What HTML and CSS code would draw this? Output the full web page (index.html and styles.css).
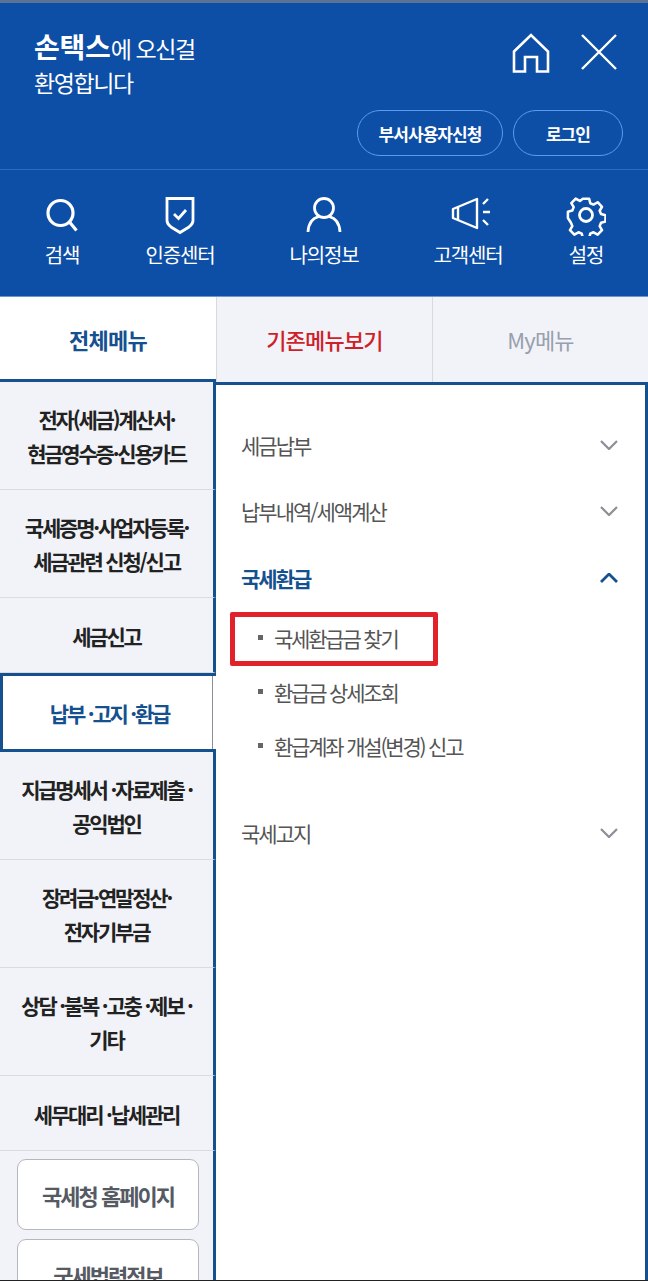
FILE: index.html
```html
<!DOCTYPE html>
<html lang="ko">
<head>
<meta charset="utf-8">
<meta name="viewport" content="width=device-width, initial-scale=1">
<title>손택스 전체메뉴</title>
<link rel="stylesheet" href="styles.css">
</head>
<body>
<div class="page">

  <header class="top">
    <div class="top-main">
      <p class="hello"><b>손택스</b>에 오신걸<br>환영합니다</p>
      <div class="top-icons">
        <svg width="38" height="40" viewBox="0 0 38 40" fill="none" stroke="#fff" stroke-width="2.6">
          <path d="M2 18.5 19 2l17 16.5V38.500H25V24H13v14.500H2z"/>
        </svg>
        <svg width="38" height="38" viewBox="0 0 38 38" fill="none" stroke="#fff" stroke-width="2.4">
          <path d="M2 2l34 34M36 2 2 36"/>
        </svg>
      </div>
    </div>
    <div class="top-btns">
      <a class="pill pill-wide">부서사용자신청</a>
      <a class="pill pill-small">로그인</a>
    </div>
  </header>

  <nav class="quick">
    <a class="quick-item">
      <svg width="34" height="38" viewBox="0 0 34 38" fill="none" stroke="#fff" stroke-width="3.200">
        <circle cx="15.500" cy="17" r="12.500"/><path d="M24.500 26l7 8.500"/>
      </svg>
      <span>검색</span>
    </a>
    <a class="quick-item">
      <svg width="34" height="38" viewBox="0 0 34 38" fill="none" stroke="#fff" stroke-width="2.800">
        <path d="M4 2.500h26v22c0 3-1.500 4.500-4 6.500l-9 5.500-9-5.500c-2.500-2-4-3.500-4-6.500z"/><path d="M11 18l4.500 4.500L23 14"/>
      </svg>
      <span>인증센터</span>
    </a>
    <a class="quick-item">
      <svg width="36" height="38" viewBox="0 0 36 38" fill="none" stroke="#fff" stroke-width="2.800">
        <circle cx="18" cy="12" r="9.500"/><path d="M2 36c.500-9 5-14 11-15.500M34 36c-.500-9-5-14-11-15.500"/>
      </svg>
      <span>나의정보</span>
    </a>
    <a class="quick-item">
      <svg width="46" height="38" viewBox="0 0 46 38" fill="none" stroke="#fff" stroke-width="2.400" stroke-linejoin="round">
        <path d="M8 13 32 3V32L8 22z"/><path d="M13 11v13"/><path d="M38 8l5-5M38 16h7M38 24l5 5"/>
      </svg>
      <span>고객센터</span>
    </a>
    <a class="quick-item">
      <svg width="40" height="40" viewBox="0 0 40 40" fill="none" stroke="#fff" stroke-width="2.800" stroke-linejoin="round">
        <circle cx="20" cy="20" r="6.500"/>
        <path d="M16.500 2h7l1.200 5 3.600 1.500 4.600-2.600 4.800 5-2.600 4.400 1.500 3.700 4.900 1.300v7l-4.900 1.300-1.500 3.700 2.600 4.400-4.800 5-4.600-2.600-3.600 1.500-1.200 5h-7l-1.200-5-3.600-1.500-4.600 2.600-4.800-5 2.600-4.400-1.500-3.700L0 23.300v-7l4.900-1.300 1.500-3.700L3.800 6.900l4.800-5 4.600 2.600 2.100-1.500z" transform="translate(1.900 1.900) scale(.905)"/>
      </svg>
      <span>설정</span>
    </a>
  </nav>

  <div class="tabs">
    <a class="tab tab-on">전체메뉴</a>
    <a class="tab tab-red">기존메뉴보기</a>
    <a class="tab tab-grey">My메뉴</a>
  </div>

  <div class="menu">
    <ul class="side">
      <li class="side-item tall">전자(세금)계산서·<br>현금영수증·신용카드</li>
      <li class="side-item tall">국세증명·사업자등록·<br>세금관련 신청/신고</li>
      <li class="side-item short">세금신고</li>
      <li class="side-item active">납부 ·고지 ·환급</li>
      <li class="side-item tall">지급명세서 ·자료제출 ·<br>공익법인</li>
      <li class="side-item tall">장려금·연말정산·<br>전자기부금</li>
      <li class="side-item tall">상담 ·불복 ·고충 ·제보 ·<br>기타</li>
      <li class="side-item short">세무대리 ·납세관리</li>
      <li class="side-links">
        <a class="link-btn">국세청 홈페이지</a>
        <a class="link-btn">국세법령정보</a>
      </li>
    </ul>

    <div class="panel">
      <div class="row">
        <span>세금납부</span>
        <svg class="chev" width="18" height="10" viewBox="0 0 18 10" fill="none" stroke="#8b8f96" stroke-width="2.200"><path d="M1 1l8 8 8-8"/></svg>
      </div>
      <div class="row">
        <span>납부내역/세액계산</span>
        <svg class="chev" width="18" height="10" viewBox="0 0 18 10" fill="none" stroke="#8b8f96" stroke-width="2.200"><path d="M1 1l8 8 8-8"/></svg>
      </div>
      <div class="row row-on">
        <span>국세환급</span>
        <svg class="chev" width="18" height="10" viewBox="0 0 18 10" fill="none" stroke="#15508f" stroke-width="2.800"><path d="M1 9l8-8 8 8"/></svg>
      </div>
      <ul class="sub">
        <li class="sub-item marked">국세환급금 찾기</li>
        <li class="sub-item">환급금 상세조회</li>
        <li class="sub-item">환급계좌 개설(변경) 신고</li>
      </ul>
      <div class="row">
        <span>국세고지</span>
        <svg class="chev" width="18" height="10" viewBox="0 0 18 10" fill="none" stroke="#8b8f96" stroke-width="2.200"><path d="M1 1l8 8 8-8"/></svg>
      </div>
    </div>
  </div>

</div>
</body>
</html>
```

FILE: styles.css
```css
*, *::before, *::after { box-sizing: border-box; }
html, body { margin: 0; padding: 0; }
ul { list-style: none; margin: 0; padding: 0; }
p { margin: 0; }

.page {
  width: 648px;
  height: 1281px;
  overflow: hidden;
  display: flex;
  flex-direction: column;
  background: #fff;
  border-bottom: 1px solid #222;
  font-family: "Noto Sans CJK KR", "Noto Sans", sans-serif;
}

/* header */
.top {
  height: 170px;
  padding: 27px 25px 0 34px;
  background: #0d4ea6;
  border-top: 3px solid #5d7396;
  border-bottom: 1px solid #2e6cc4;
  color: #fff;
}
.top-main { display: flex; justify-content: space-between; height: 80px; }
.hello { padding-top: 1px; font-size: 23px; line-height: 34px; letter-spacing: -1.400px; }
.hello b { font-size: 28px; line-height: 1; letter-spacing: -.200px; }
.top-icons { display: flex; gap: 30px; padding: 3px 5px 0 0; align-items: flex-start; }
.top-btns { display: flex; justify-content: flex-end; gap: 10px; }
.pill {
  height: 46px;
  border: 1px solid #5c9bf0;
  border-radius: 23px;
  display: flex;
  align-items: center;
  justify-content: center;
  font-size: 17px;
  font-weight: 700;
  letter-spacing: -.900px;
}
.pill-wide { width: 146px; }
.pill-small { width: 110px; }

/* quick icons */
.quick {
  height: 127px;
  padding-top: 24px;
  display: grid;
  grid-template-columns: 124px 112px 176px 112px 124px;
  background: #0d4ea6;
  border-bottom: 1px solid #6f96cc;
  color: #fff;
}
.quick-item {
  display: flex;
  flex-direction: column;
  align-items: center;
  font-size: 20px;
  letter-spacing: -1.200px;
}
.quick-item svg { height: 42px; }
.quick-item span { margin-top: 5px; line-height: 28px; }

/* tabs */
.tabs { height: 85px; flex: none; display: flex; }
.tab {
  width: 216px;
  display: flex;
  align-items: center;
  justify-content: center;
  padding-bottom: 2px;
  background: #f1f3f8;
  border-left: 1px solid #d8dade;
  font-size: 22px;
  letter-spacing: -.800px;
}
.tab-on { background: #fff; border-left: 0; color: #15508f; font-weight: 700; }
.tab-red { color: #cf1f2a; font-weight: 500; }
.tab-grey { color: #97a0ae; }

/* left column */
.menu { flex: 1; display: flex; min-height: 0; }
.side {
  width: 216px;
  flex: none;
  margin-top: -3px;
  background: #f1f3f8;
  border-top: 3px solid #15508f;
}
.side-item {
  display: flex;
  align-items: center;
  justify-content: center;
  padding-top: 1px;
  text-align: center;
  border-right: 3px solid #15508f;
  border-bottom: 1px solid #d9dbe0;
  color: #222;
  font-size: 21px;
  font-weight: 700;
  line-height: 34px;
  letter-spacing: -2.200px;
}
.tall { height: 108px; }
.short { height: 75px; }
.active {
  position: relative;
  height: 79px;
  background: #fff;
  border: 3px solid #15508f;
  border-right: 0;
  color: #15508f;
}
.active::after {
  content: "";
  position: absolute;
  top: 0;
  bottom: 0;
  right: 3px;
  width: 1px;
  background: #8a8f99;
}
.side-links {
  display: flex;
  flex-direction: column;
  gap: 9px;
  padding: 8px 0 0 17px;
  height: 400px;
  border-right: 3px solid #15508f;
}
.link-btn {
  height: 71px;
  width: 182px;
  flex: none;
  display: flex;
  align-items: center;
  justify-content: center;
  background: #fff;
  border: 1px solid #b4b7bd;
  border-radius: 9px;
  color: #555a63;
  font-size: 22px;
  font-weight: 700;
  letter-spacing: -2px;
}

/* right panel */
.panel {
  flex: 1;
  padding-top: 27px;
  border-top: 3px solid #15508f;
  border-right: 3px solid #15508f;
  background: #fff;
}
.row {
  height: 66px;
  padding: 0 27px 0 25px;
  display: flex;
  align-items: center;
  justify-content: space-between;
  color: #555;
  font-size: 21px;
  letter-spacing: -2px;
}
.row-on { margin-top: 1px; color: #15508f; font-weight: 700; }
.sub { padding: 0 0 27px; }
.sub-item {
  position: relative;
  height: 54px;
  padding-left: 58px;
  display: flex;
  align-items: center;
  color: #555;
  font-size: 21px;
  letter-spacing: -2.200px;
}
.sub-item::before {
  content: "";
  position: absolute;
  left: 42px;
  top: 24px;
  width: 5px;
  height: 5px;
  background: #666;
}
.marked::after {
  content: "";
  position: absolute;
  left: 14px;
  top: 1px;
  width: 208px;
  height: 54px;
  border: 5px solid #e1222b;
  border-radius: 2px;
}
```
